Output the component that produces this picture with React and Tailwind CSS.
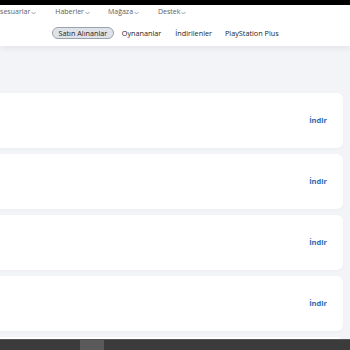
const Chevron = () => (
  <svg width="5" height="4" viewBox="0 0 5 4" className="ml-[1px] mt-[1px]">
    <path d="M0.5 1 L2.5 3 L4.5 1" fill="none" stroke="#7a8aa0" strokeWidth="0.8" />
  </svg>
);

const App = () => {
  const navItems = [
    { name: 'Aksesuarlar', cls: 'ml-[-8px]' },
    { name: 'Haberler', cls: 'ml-[19px]' },
    { name: 'Mağaza', cls: 'ml-[18px]' },
    { name: 'Destek', cls: 'ml-[19px]' },
  ];
  const tabs = [
    { name: 'Oynananlar', cls: 'ml-[8px]' },
    { name: 'İndirilenler', cls: 'ml-[14px]' },
    { name: 'PlayStation Plus', cls: 'ml-[13px]' },
  ];
  const cards = [1, 2, 3, 4, 5];

  return (
    <div className="w-[350px] h-[350px] overflow-hidden flex flex-col bg-[#f3f4f8] font-['Open_Sans',sans-serif]">
      {/* Top black strip */}
      <div className="h-[5px] bg-black shrink-0" />

      {/* Header */}
      <div className="bg-white shrink-0 h-[41px] flex flex-col shadow-[0_3px_6px_rgba(0,0,0,0.06)]">
        <div className="flex items-center h-[14px] pt-[1px] text-[7px] text-[#5e5e5e] whitespace-nowrap">
          {navItems.map((item) => (
            <div key={item.name} className={`flex items-center ${item.cls}`}>
              {item.name}
              <Chevron />
            </div>
          ))}
        </div>
        <div className="flex items-center h-[20px] mt-[4px] text-[7.25px] text-[#1c1c1c] whitespace-nowrap">
          <div className="ml-[52px] h-[12px] px-[5.5px] flex items-center rounded-full bg-[#dfe3e9] border border-[#9aa3ad]">
            Satın Alınanlar
          </div>
          {tabs.map((tab) => (
            <div key={tab.name} className={tab.cls}>
              {tab.name}
            </div>
          ))}
        </div>
      </div>

      {/* Cards */}
      <div className="flex-1 overflow-hidden pt-[47px] flex flex-col gap-[6px]">
        {cards.map((c) => (
          <div
            key={c}
            className="shrink-0 ml-[-12px] w-[355px] h-[55px] bg-white rounded-[6px] shadow-[0_1px_3px_rgba(0,0,0,0.03)] flex items-center justify-end pr-[16px]"
          >
            <span className="text-[7.5px] font-bold text-[#2c6ab2]">İndir</span>
          </div>
        ))}
      </div>

      {/* Bottom bar */}
      <div className="h-[11px] shrink-0 bg-[#3b3b3b] border-t border-[#555] flex">
        <div className="ml-[80px] w-[24px] h-full bg-[#5a5a5a]" />
      </div>
    </div>
  );
};

export default App;
